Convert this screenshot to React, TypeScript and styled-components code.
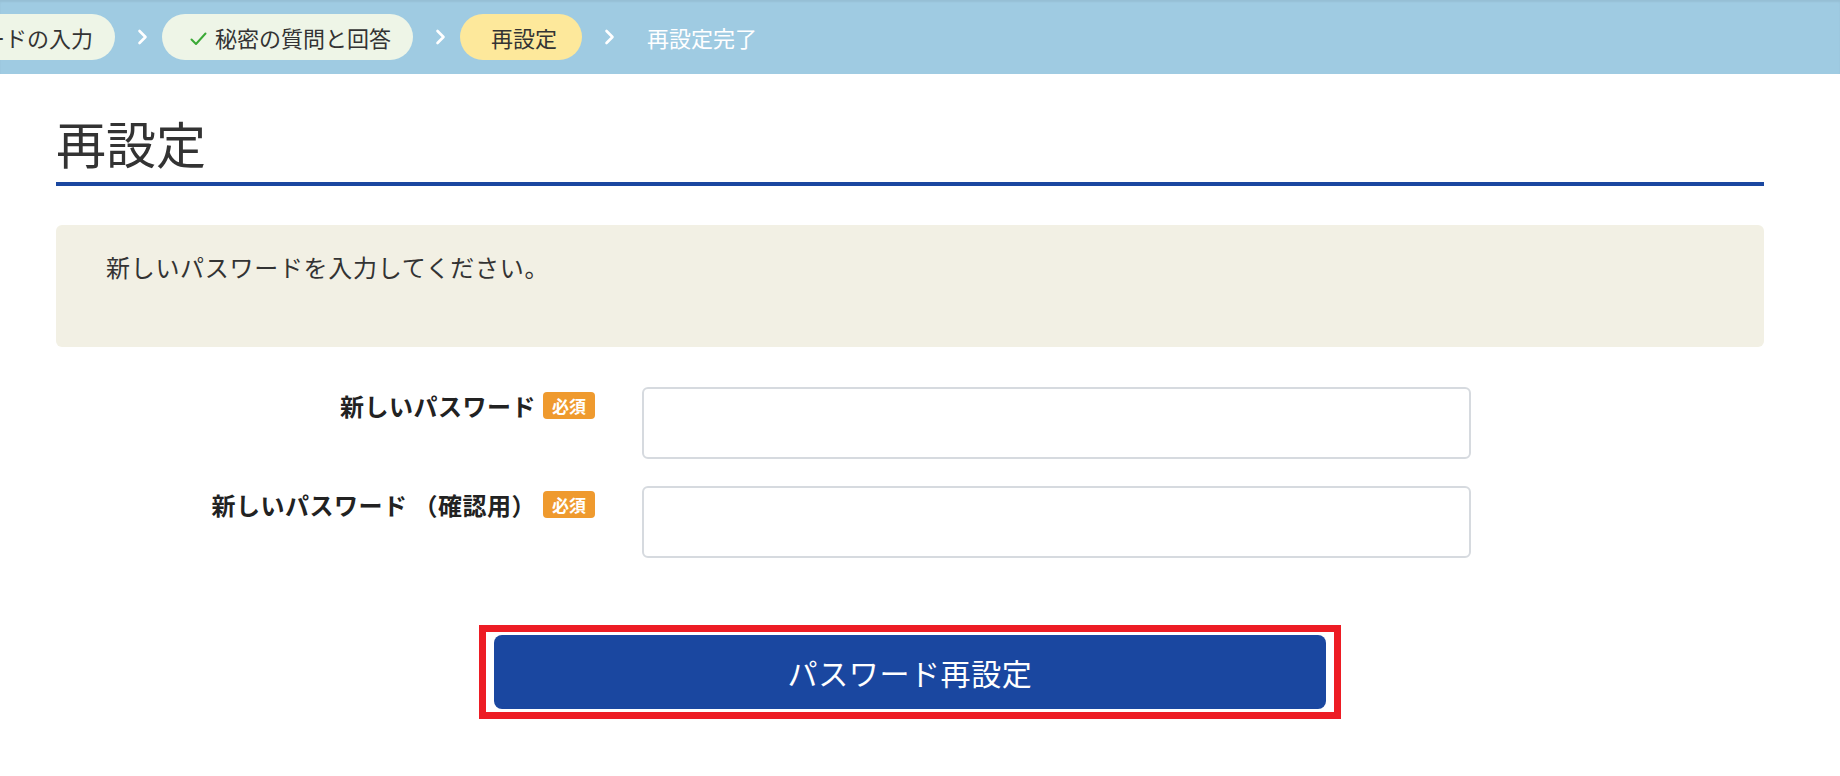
import React from "react";
import styled, { createGlobalStyle } from "styled-components";

const GlobalStyle = createGlobalStyle`
  html, body {
    margin: 0;
    padding: 0;
    background: #ffffff;
    font-family: "Noto Sans CJK JP", "Noto Sans", sans-serif;
    color: #333333;
  }
  * { box-sizing: border-box; }
`;

const StepBar = styled.nav`
  height: 74px;
  background: #9fcbe2;
  box-shadow: inset 0 2px 2px rgba(0, 0, 0, 0.06);
  display: flex;
  align-items: center;
  overflow: hidden;
`;

const StepList = styled.ol`
  list-style: none;
  margin: 0 0 0 -111px;
  padding: 0;
  display: flex;
  align-items: center;
  flex-shrink: 0;
`;

const StepItem = styled.li`
  display: flex;
  align-items: center;
`;

const Step = styled.span<{ $state: "done" | "current" | "todo" }>`
  display: inline-flex;
  align-items: center;
  gap: 8px;
  height: 46px;
  padding: ${(p) => (p.$state === "todo" ? "0 22px 0 18px" : "0 22px 0 28px")};
  border-radius: 23px;
  font-size: 22px;
  line-height: 1;
  white-space: nowrap;
  background: ${(p) =>
    p.$state === "done" ? "#eef5e7" : p.$state === "current" ? "#fde89b" : "transparent"};
  color: ${(p) => (p.$state === "todo" ? "#ffffff" : "#333333")};
  min-width: ${(p) => (p.$state === "current" ? "122px" : "0")};
  justify-content: center;
`;

const Chevron = styled.svg`
  width: 11px;
  height: 16px;
  margin: 0 14px 0 22px;
  flex-shrink: 0;
`;

const Check = styled.svg`
  width: 17px;
  height: 14px;
  margin-top: 4px;
  flex-shrink: 0;
`;

const Main = styled.main`
  padding: 0 76px 0 56px;
`;

const Title = styled.h1`
  margin: 38px 0 0;
  padding: 0 0 10px 0;
  font-size: 50px;
  line-height: 60px;
  font-weight: 400;
  color: #333333;
  border-bottom: 4px solid #1a47a0;
`;

const InfoBox = styled.div`
  margin-top: 39px;
  background: #f2f0e4;
  border-radius: 6px;
  padding: 24px 50px 62px;
`;

const InfoText = styled.p`
  margin: 0;
  font-size: 24px;
  line-height: 36px;
  letter-spacing: 0.7px;
  color: #333333;
`;

const Form = styled.form`
  margin-top: 40px;
  display: grid;
  grid-template-columns: 539px 829px;
  column-gap: 47px;
  row-gap: 27px;
`;

const Label = styled.label`
  display: flex;
  justify-content: flex-end;
  align-items: center;
  gap: 7px;
  height: 36px;
  font-size: 24px;
  font-weight: 700;
  letter-spacing: 0.5px;
  color: #222222;
  white-space: nowrap;
`;

const Badge = styled.span`
  display: inline-block;
  height: 27px;
  padding: 0 9px;
  border-radius: 4px;
  background: #ef9a2e;
  color: #ffffff;
  font-size: 17px;
  font-weight: 700;
  letter-spacing: 0;
  line-height: 27px;
`;

const Input = styled.input`
  width: 100%;
  height: 72px;
  border: 2px solid #d6dadf;
  border-radius: 6px;
  background: #ffffff;
  font-size: 22px;
  padding: 0 16px;
  outline: none;
`;

const Actions = styled.div`
  margin-top: 67px;
  display: flex;
  justify-content: center;
`;

const Highlight = styled.div`
  border: 7px solid #ed1c24;
  padding: 3px 8px;
`;

const SubmitButton = styled.button`
  display: flex;
  align-items: center;
  justify-content: center;
  width: 832px;
  height: 74px;
  border: none;
  border-radius: 8px;
  background: #1a47a0;
  color: #ffffff;
  font-family: "Noto Sans CJK JP", "Noto Sans", sans-serif;
  font-size: 30px;
  letter-spacing: 0.6px;
  font-weight: 400;
  cursor: pointer;
`;

const ChevronIcon = () => (
  <Chevron viewBox="0 0 11 16" aria-hidden="true">
    <path d="M2.5 2 L8.5 8 L2.5 14" fill="none" stroke="#ffffff" strokeWidth="2.6" strokeLinecap="round" strokeLinejoin="round" />
  </Chevron>
);

const CheckIcon = () => (
  <Check viewBox="0 0 17 14" aria-hidden="true">
    <path d="M1.5 7.5 L6 12 L15.5 1.5" fill="none" stroke="#3aa935" strokeWidth="2" strokeLinecap="round" strokeLinejoin="round" />
  </Check>
);

const steps: { label: string; state: "done" | "current" | "todo"; check?: boolean }[] = [
  { label: "パスワードの入力", state: "done" },
  { label: "秘密の質問と回答", state: "done", check: true },
  { label: "再設定", state: "current" },
  { label: "再設定完了", state: "todo" },
];

export default function App() {
  return (
    <>
      <GlobalStyle />
      <StepBar>
        <StepList>
          {steps.map((s, i) => (
            <StepItem key={s.label}>
              {i > 0 && <ChevronIcon />}
              <Step $state={s.state}>
                {s.check && <CheckIcon />}
                {s.label}
              </Step>
            </StepItem>
          ))}
        </StepList>
      </StepBar>
      <Main>
        <Title>再設定</Title>
        <InfoBox>
          <InfoText>新しいパスワードを入力してください。</InfoText>
        </InfoBox>
        <Form onSubmit={(e) => e.preventDefault()}>
          <Label htmlFor="pw1">
            新しいパスワード
            <Badge>必須</Badge>
          </Label>
          <Input id="pw1" type="password" />
          <Label htmlFor="pw2">
            新しいパスワード （確認用）
            <Badge>必須</Badge>
          </Label>
          <Input id="pw2" type="password" />
        </Form>
        <Actions>
          <Highlight>
            <SubmitButton type="button">パスワード再設定</SubmitButton>
          </Highlight>
        </Actions>
      </Main>
    </>
  );
}
